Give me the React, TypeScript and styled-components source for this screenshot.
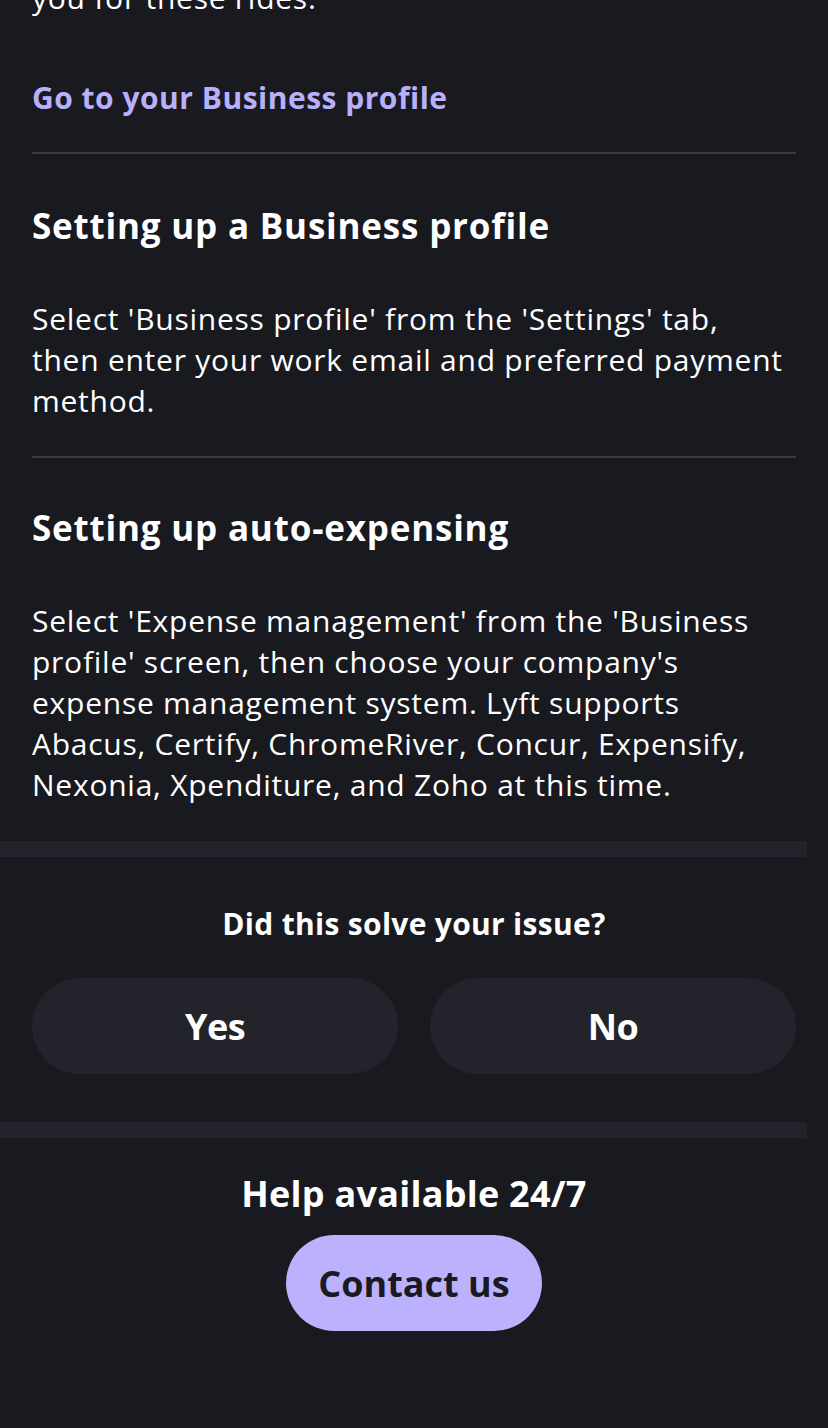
import styled, { createGlobalStyle } from "styled-components";

const GlobalStyle = createGlobalStyle`
  html, body {
    margin: 0;
    padding: 0;
    background-color: #191920;
  }
  body {
    font-family: "Open Sans", "Liberation Sans", sans-serif;
    color: #ffffff;
    -webkit-font-smoothing: antialiased;
  }
`;

const Page = styled.div`
  width: 828px;
  min-height: 1428px;
  background-color: #191920;
  overflow: hidden;
`;

const Article = styled.div`
  padding: 0 32px;
  display: flex;
  flex-direction: column;
`;

const Body = styled.p<{ $top?: number }>`
  margin: ${(p) => p.$top ?? 0}px 0 0 0;
  max-width: 758px;
  font-size: 30px;
  line-height: 41px;
  letter-spacing: 0.75px;
  color: #ffffff;
`;

const LinkText = styled.a`
  margin-top: 59px;
  font-size: 30px;
  line-height: 41px;
  font-weight: 700;
  letter-spacing: 0.5px;
  color: #b9b0fc;
  text-decoration: none;
`;

const Divider = styled.hr<{ $top: number }>`
  margin: ${(p) => p.$top}px 0 0 0;
  border: 0;
  height: 2px;
  background-color: #3a3a42;
`;

const Heading = styled.h2<{ $top: number }>`
  margin: ${(p) => p.$top}px 0 0 0;
  font-size: 35px;
  line-height: 44px;
  font-weight: 700;
  letter-spacing: 0.8px;
`;

const Band = styled.div<{ $top: number }>`
  margin: ${(p) => p.$top}px 21px 0 0;
  height: 16px;
  background-color: #23232b;
`;

const Feedback = styled.section`
  padding: 46px 32px 0 32px;
  display: flex;
  flex-direction: column;
  align-items: center;
`;

const Question = styled.div`
  font-size: 30px;
  line-height: 41px;
  font-weight: 700;
  letter-spacing: 0.3px;
`;

const Choices = styled.div`
  margin-top: 34px;
  width: 100%;
  display: grid;
  grid-template-columns: 1fr 1fr;
  gap: 32px;
`;

const Choice = styled.button`
  height: 96px;
  border: 0;
  border-radius: 48px;
  background-color: #23232b;
  color: #ffffff;
  font-family: inherit;
  font-size: 36px;
  font-weight: 700;
  letter-spacing: -0.5px;
`;

const Help = styled.section`
  padding-top: 34px;
  display: flex;
  flex-direction: column;
  align-items: center;
`;

const HelpTitle = styled.div`
  font-size: 36px;
  line-height: 44px;
  font-weight: 700;
  letter-spacing: 0.25px;
`;

const ContactButton = styled.button`
  margin-top: 19px;
  width: 256px;
  height: 96px;
  border: 0;
  border-radius: 48px;
  background-color: #bbb1fd;
  color: #1b1a22;
  font-family: inherit;
  font-size: 36px;
  font-weight: 700;
  letter-spacing: 0;
`;

export default function App() {
  return (
    <Page>
      <GlobalStyle />
      <Article>
        <Body $top={-23}>you for these rides.</Body>
        <LinkText href="#">Go to your Business profile</LinkText>
        <Divider $top={34} />
        <Heading $top={50}>Setting up a Business profile</Heading>
        <Body $top={50}>
          Select 'Business profile' from the 'Settings' tab, then enter your
          work email and preferred payment method.
        </Body>
        <Divider $top={35} />
        <Heading $top={48}>Setting up auto-expensing</Heading>
        <Body $top={50}>
          Select 'Expense management' from the 'Business profile' screen, then
          choose your company's expense management system. Lyft supports
          Abacus, Certify, ChromeRiver, Concur, Expensify, Nexonia,
          Xpenditure, and Zoho at this time.
        </Body>
      </Article>
      <Band $top={36} />
      <Feedback>
        <Question>Did this solve your issue?</Question>
        <Choices>
          <Choice>Yes</Choice>
          <Choice>No</Choice>
        </Choices>
      </Feedback>
      <Band $top={48} />
      <Help>
        <HelpTitle>Help available 24/7</HelpTitle>
        <ContactButton>Contact us</ContactButton>
      </Help>
    </Page>
  );
}
